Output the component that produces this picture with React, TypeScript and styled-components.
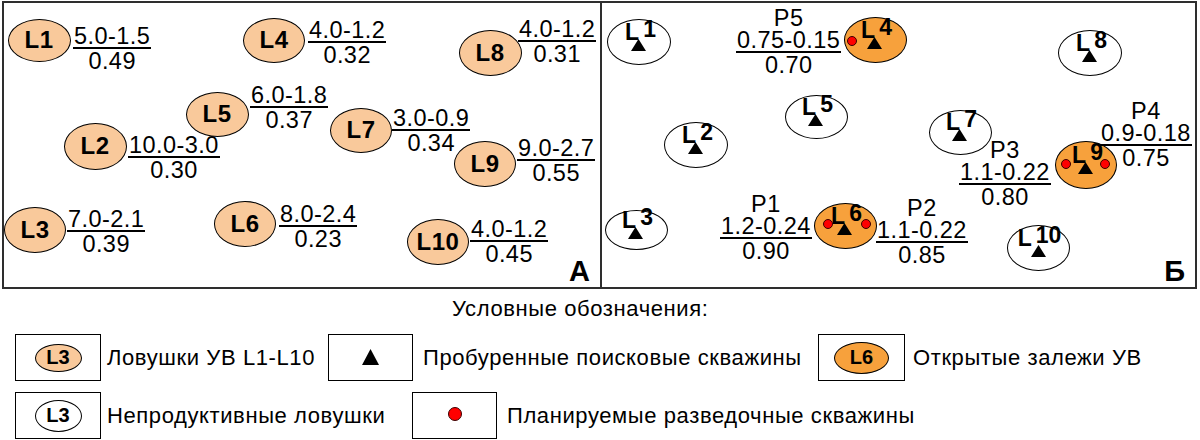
import React from "react";
import styled, { createGlobalStyle, css } from "styled-components";

const GlobalStyle = createGlobalStyle`
  html, body {
    margin: 0;
    padding: 0;
    background: #fff;
  }
  body {
    font-family: "Liberation Sans", Arial, sans-serif;
    color: #000;
  }
`;

type Fill = "light" | "dark" | "none";

const fills: Record<Fill, string> = {
  light: "#f9c99b",
  dark: "#f7a13c",
  none: "#ffffff",
};

// panel origins in page coordinates (inside the frame border)
const ORIGIN_A = { x: 4, y: 3 };
const ORIGIN_B = { x: 602, y: 3 };

const Page = styled.div`
  width: 1200px;
  height: 440px;
  overflow: hidden;
  padding-top: 1px;
  box-sizing: border-box;
`;

const MapFrame = styled.div`
  margin-left: 2px;
  width: 1195px;
  height: 288px;
  box-sizing: border-box;
  border: 2px solid #2e2e2e;
  display: grid;
  grid-template-columns: 598px 1fr;
`;

const Panel = styled.div<{ $divider?: boolean }>`
  position: relative;
  ${(p) =>
    p.$divider &&
    css`
      border-right: 2px solid #2e2e2e;
    `}
`;

const PanelLetter = styled.div`
  position: absolute;
  right: 10px;
  bottom: 2px;
  font-size: 29px;
  line-height: 28px;
  font-weight: 700;
`;

const Ellipse = styled.div<{ $fill: Fill }>`
  position: absolute;
  box-sizing: border-box;
  border: 1.5px solid #000;
  border-radius: 50%;
  background: ${(p) => fills[p.$fill]};
  display: flex;
  flex-direction: column;
  align-items: center;
  justify-content: center;
`;

const TrapLabel = styled.div`
  font-size: 24px;
  line-height: 24px;
  font-weight: 700;
  letter-spacing: 0.5px;
`;

const WellMark = styled.div`
  display: flex;
  flex-direction: column;
  align-items: center;
  margin-top: -10px;
`;

const WellLabel = styled.div`
  font-size: 23px;
  line-height: 18px;
  font-weight: 700;
  white-space: nowrap;
  padding-left: 3px;
`;

const Raised = styled.span`
  position: relative;
  top: -3px;
  margin-left: 4px;
`;

const Triangle = styled.svg`
  display: block;
  margin-top: -2px;
`;

const Dot = styled.div<{ $dx: number; $dy: number; $size?: number }>`
  position: absolute;
  left: calc(50% + ${(p) => p.$dx}px);
  top: calc(50% + ${(p) => p.$dy}px);
  width: ${(p) => p.$size ?? 10}px;
  height: ${(p) => p.$size ?? 10}px;
  margin: ${(p) => -(p.$size ?? 10) / 2}px 0 0 ${(p) => -(p.$size ?? 10) / 2}px;
  box-sizing: border-box;
  border-radius: 50%;
  background: #ff0000;
  border: 1.5px solid #3a0000;
`;

const FractionBox = styled.div`
  position: absolute;
  display: flex;
  flex-direction: column;
  align-items: center;
  font-size: 23.5px;
  letter-spacing: 0.45px;
  white-space: nowrap;
`;

const FractionTitle = styled.div`
  line-height: 22px;
`;

const Numerator = styled.div`
  line-height: 22px;
  padding: 0 1px 0 1px;
  border-bottom: 2px solid #000;
`;

const Denominator = styled.div`
  line-height: 22px;
  margin-top: 1px;
`;

const Legend = styled.div`
  margin-top: 8px;
`;

const LegendTitle = styled.div`
  font-size: 22px;
  line-height: 24px;
  letter-spacing: 0.6px;
  padding-left: 452px;
`;

const LegendRow = styled.div<{ $first?: boolean }>`
  display: flex;
  align-items: center;
  padding-left: 15px;
  margin-top: ${(p) => (p.$first ? 13 : 11)}px;
`;

const LegendBox = styled.div<{ $w: number }>`
  width: ${(p) => p.$w}px;
  height: 47px;
  box-sizing: border-box;
  border: 1.5px solid #000;
  display: flex;
  align-items: center;
  justify-content: center;
  flex-shrink: 0;
`;

const LegendEllipse = styled.div<{ $fill: Fill; $w: number; $h: number }>`
  width: ${(p) => p.$w}px;
  height: ${(p) => p.$h}px;
  box-sizing: border-box;
  border: 1.5px solid #000;
  border-radius: 50%;
  background: ${(p) => fills[p.$fill]};
  display: flex;
  align-items: center;
  justify-content: center;
  font-size: 20px;
  font-weight: 700;
`;

const LegendDot = styled.div`
  width: 14px;
  height: 14px;
  box-sizing: border-box;
  border-radius: 50%;
  background: #ff0000;
  border: 1.5px solid #3a0000;
  margin-top: -3px;
`;

const LegendText = styled.div<{ $gap: number; $width?: number }>`
  margin-left: ${(p) => p.$gap}px;
  ${(p) =>
    p.$width &&
    css`
      width: ${p.$width}px;
    `}
  flex-shrink: 0;
  font-size: 22px;
  line-height: 24px;
  letter-spacing: 0.6px;
  white-space: nowrap;
`;

type TrapData = {
  n: string;
  x: number;
  y: number;
  w: number;
  h: number;
  fill: Fill;
  dots?: [number, number][];
};

type FracData = { x: number; y: number; num: string; den: string; title?: string };

const trapsA: TrapData[] = [
  { n: "1", x: 39, y: 40, w: 63, h: 43, fill: "light" },
  { n: "4", x: 274, y: 40, w: 62, h: 45, fill: "light" },
  { n: "8", x: 490, y: 53, w: 63, h: 46, fill: "light" },
  { n: "5", x: 217, y: 114, w: 63, h: 45, fill: "light" },
  { n: "7", x: 361, y: 130, w: 62, h: 45, fill: "light" },
  { n: "2", x: 95, y: 146, w: 63, h: 47, fill: "light" },
  { n: "9", x: 485, y: 164, w: 62, h: 46, fill: "light" },
  { n: "3", x: 35, y: 230, w: 62, h: 46, fill: "light" },
  { n: "6", x: 245, y: 224, w: 62, h: 46, fill: "light" },
  { n: "10", x: 438, y: 242, w: 62, h: 46, fill: "light" },
];

const fracsA: FracData[] = [
  { x: 73, y: 48, num: "5.0-1.5", den: "0.49" },
  { x: 308, y: 42, num: "4.0-1.2", den: "0.32" },
  { x: 518, y: 41, num: "4.0-1.2", den: "0.31" },
  { x: 250, y: 107, num: "6.0-1.8", den: "0.37" },
  { x: 392, y: 130, num: "3.0-0.9", den: "0.34" },
  { x: 128, y: 157, num: "10.0-3.0", den: "0.30" },
  { x: 517, y: 160, num: "9.0-2.7", den: "0.55" },
  { x: 67, y: 231, num: "7.0-2.1", den: "0.39" },
  { x: 279, y: 226, num: "8.0-2.4", den: "0.23" },
  { x: 470, y: 241, num: "4.0-1.2", den: "0.45" },
];

const trapsB: TrapData[] = [
  { n: "1", x: 639, y: 42, w: 64, h: 46, fill: "none" },
  { n: "4", x: 875, y: 40, w: 63, h: 46, fill: "dark", dots: [[-23, 1]] },
  { n: "8", x: 1090, y: 53, w: 64, h: 46, fill: "none" },
  { n: "5", x: 816, y: 117, w: 63, h: 44, fill: "none" },
  { n: "2", x: 696, y: 145, w: 64, h: 46, fill: "none" },
  { n: "7", x: 960, y: 132, w: 63, h: 45, fill: "none" },
  { n: "9", x: 1086, y: 165, w: 62, h: 48, fill: "dark", dots: [[-20, -1], [19, -1]] },
  { n: "3", x: 636, y: 230, w: 63, h: 40, fill: "none" },
  { n: "6", x: 845, y: 226, w: 63, h: 46, fill: "dark", dots: [[-17, -2], [21, -2]] },
  { n: "10", x: 1038, y: 248, w: 63, h: 46, fill: "none" },
];

const fracsB: FracData[] = [
  { x: 736, y: 52, title: "Р5", num: "0.75-0.15", den: "0.70" },
  { x: 1100, y: 145, title: "Р4", num: "0.9-0.18", den: "0.75" },
  { x: 959, y: 184, title: "Р3", num: "1.1-0.22", den: "0.80" },
  { x: 720, y: 238, title: "Р1", num: "1.2-0.24", den: "0.90" },
  { x: 876, y: 242, title: "Р2", num: "1.1-0.22", den: "0.85" },
];

const WellTriangle = ({ w, h }: { w: number; h: number }) => (
  <Triangle width={w} height={h} viewBox={`0 0 ${w} ${h}`}>
    <polygon points={`${w / 2},0 ${w},${h} 0,${h}`} fill="#000" />
  </Triangle>
);

const Trap = ({ t, origin, drilled }: { t: TrapData; origin: { x: number; y: number }; drilled?: boolean }) => (
  <Ellipse
    $fill={t.fill}
    style={{ left: t.x - t.w / 2 - origin.x, top: t.y - t.h / 2 - origin.y, width: t.w, height: t.h }}
  >
    {drilled ? (
      <WellMark>
        <WellLabel>
          L<Raised>{t.n}</Raised>
        </WellLabel>
        <WellTriangle w={15} h={12} />
      </WellMark>
    ) : (
      <TrapLabel>L{t.n}</TrapLabel>
    )}
    {t.dots?.map(([dx, dy], i) => (
      <Dot key={i} $dx={dx} $dy={dy} />
    ))}
  </Ellipse>
);

const Fraction = ({ f, origin }: { f: FracData; origin: { x: number; y: number } }) => (
  <FractionBox style={{ left: f.x - origin.x, top: f.y - 23 - (f.title ? 22 : 0) - origin.y }}>
    {f.title && <FractionTitle>{f.title}</FractionTitle>}
    <Numerator>{f.num}</Numerator>
    <Denominator>{f.den}</Denominator>
  </FractionBox>
);

export default function App() {
  return (
    <Page>
      <GlobalStyle />
      <MapFrame>
        <Panel $divider>
          {trapsA.map((t) => (
            <Trap key={t.n} t={t} origin={ORIGIN_A} />
          ))}
          {fracsA.map((f, i) => (
            <Fraction key={i} f={f} origin={ORIGIN_A} />
          ))}
          <PanelLetter>А</PanelLetter>
        </Panel>
        <Panel>
          {trapsB.map((t) => (
            <Trap key={t.n} t={t} origin={ORIGIN_B} drilled />
          ))}
          {fracsB.map((f, i) => (
            <Fraction key={i} f={f} origin={ORIGIN_B} />
          ))}
          <PanelLetter>Б</PanelLetter>
        </Panel>
      </MapFrame>

      <Legend>
        <LegendTitle>Условные обозначения:</LegendTitle>
        <LegendRow $first>
          <LegendBox $w={86}>
            <LegendEllipse $fill="light" $w={47} $h={28}>
              L3
            </LegendEllipse>
          </LegendBox>
          <LegendText $gap={6} $width={221}>
            Ловушки УВ L1-L10
          </LegendText>
          <LegendBox $w={85}>
            <WellTriangle w={17} h={16} />
          </LegendBox>
          <LegendText $gap={10} $width={395}>
            Пробуренные поисковые скважины
          </LegendText>
          <LegendBox $w={87}>
            <LegendEllipse $fill="dark" $w={55} $h={32}>
              L6
            </LegendEllipse>
          </LegendBox>
          <LegendText $gap={8}>Открытые залежи УВ</LegendText>
        </LegendRow>
        <LegendRow>
          <LegendBox $w={86}>
            <LegendEllipse $fill="none" $w={47} $h={32}>
              L3
            </LegendEllipse>
          </LegendBox>
          <LegendText $gap={6} $width={305}>
            Непродуктивные ловушки
          </LegendText>
          <LegendBox $w={85}>
            <LegendDot />
          </LegendBox>
          <LegendText $gap={10}>Планируемые разведочные скважины</LegendText>
        </LegendRow>
      </Legend>
    </Page>
  );
}
